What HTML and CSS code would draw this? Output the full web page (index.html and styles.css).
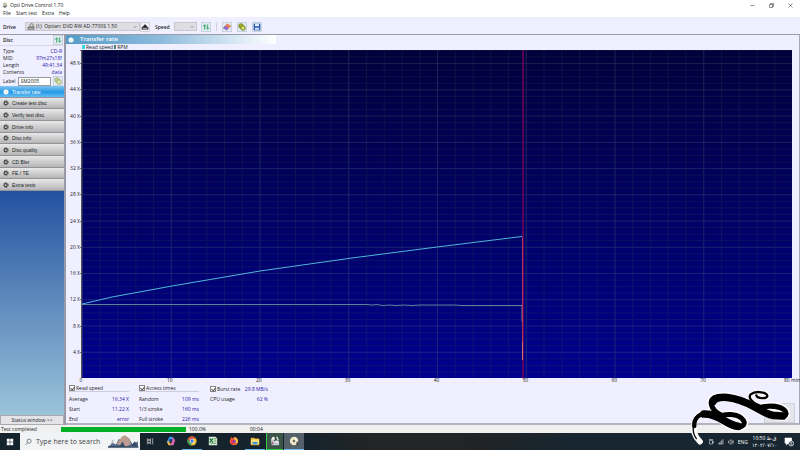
FILE: index.html
```html
<!DOCTYPE html>
<html lang="en">
<head>
<meta charset="utf-8">
<title>Opti Drive Control 1.70</title>
<link rel="stylesheet" href="styles.css">
</head>
<body>
<svg class="defs" width="0" height="0" aria-hidden="true">
  <symbol id="disc" viewBox="0 0 12 12"><circle cx="6" cy="6" r="5" fill="currentColor"/><circle cx="5" cy="6" r="1.7" fill="#ddd"/><path d="M6 6l5 4M7 3l3 1" stroke="#ddd" stroke-width="1.2"/></symbol>
  <symbol id="refresh" viewBox="0 0 12 12"><path d="M4 10V3M1.5 5.500L4 2.500l2.500 3M8.500 2v7M6.500 7l2 2.500 2-2.500" fill="none" stroke="#36a56b" stroke-width="1.400"/></symbol>
  <symbol id="discs" viewBox="0 0 12 12"><circle cx="4.500" cy="4.500" r="3.500" fill="#a9b52c" stroke="#606718"/><circle cx="7.500" cy="7.500" r="3.500" fill="#c4ce45" stroke="#606718"/><circle cx="7.500" cy="7.500" r="1" fill="#fff"/></symbol>
</svg>
<header class="titlebar">
  <svg class="app-icon" viewBox="0 0 12 12"><path d="M1 8l6-3 4 2-5 4z" fill="#777"/><circle cx="6" cy="4" r="3" fill="#d9d59b" stroke="#777"/></svg>
  <h1>Opti Drive Control 1.70</h1>
  <div class="window-buttons">
    <button aria-label="Minimize"><svg viewBox="0 0 10 10"><path d="M1 5h8"/></svg></button>
    <button aria-label="Restore"><svg viewBox="0 0 10 10"><path d="M1 3h6v6H1zM3 3V1h6v6H7"/></svg></button>
    <button aria-label="Close"><svg viewBox="0 0 10 10"><path d="M1 1l8 8M9 1L1 9"/></svg></button>
  </div>
</header>
<nav class="menubar"><button>File</button><button>Start test</button><button>Extra</button><button>Help</button></nav>
<div class="toolbar">
  <label class="drive-label" for="drive">Drive</label>
  <div class="drive-box">
    <svg class="icon" viewBox="0 0 12 12"><path d="M1 6l3-1h7v5H1z" fill="#777"/><circle cx="7" cy="3.500" r="2.500" fill="#ddd" stroke="#555"/><path d="M3 8h6" stroke="#eee"/></svg>
    <select id="drive"><option>(I:)&nbsp; Optiarc DVD RW AD-7700S 1.50</option></select>
    <svg class="chevron" viewBox="0 0 8 8"><path d="M1 2l3 3 3-3"/></svg>
  </div>
  <button class="tool eject" aria-label="Eject"><svg class="icon" viewBox="0 0 12 12"><path d="M6 2l4 4H2z" fill="#222"/><path d="M1 6h10v4H1z" fill="#444"/><path d="M3 8.500h6" stroke="#eee"/></svg></button>
  <label class="speed-label" for="speed">Speed</label>
  <div class="speed-box"><select id="speed"><option></option></select><svg class="chevron" viewBox="0 0 8 8"><path d="M1 2l3 3 3-3"/></svg></div>
  <button class="tool framed" aria-label="Refresh speed"><svg class="icon"><use href="#refresh"/></svg></button>
  <span class="divider"></span>
  <button class="tool framed" aria-label="Erase disc"><svg class="icon" viewBox="0 0 12 12"><path d="M0 8l6-7 6 3-6 7z" fill="#ce688f"/><path d="M0 8l3-4 5 3-2 4z" fill="#8d70c8"/><path d="M6 1l6 3-2 3-6-3z" fill="#ee8848"/></svg></button>
  <button class="tool framed" aria-label="Copy disc"><svg class="icon"><use href="#discs"/></svg></button>
  <button class="tool framed" aria-label="Save"><svg class="icon" viewBox="0 0 12 12"><path d="M1 1h10v10H1z" fill="#2852b8"/><path d="M3 1h6v4H3zM3 7h6v3H3z" fill="#dce9ff"/></svg></button>
</div>
<div class="workspace">
  <aside class="sidebar">
    <div class="disc-head"><h2>Disc</h2><button class="tool framed" aria-label="Refresh disc"><svg class="icon"><use href="#refresh"/></svg></button></div>
    <dl class="disc-info">
      <div><dt>Type</dt><dd>CD-R</dd></div>
      <div><dt>MID</dt><dd>97m27s18f</dd></div>
      <div><dt>Length</dt><dd>49:41.34</dd></div>
      <div><dt>Contents</dt><dd>data</dd></div>
    </dl>
    <div class="disc-label"><label for="label">Label</label><input id="label" value="SM2005"><button class="tool framed" aria-label="Edit label"><svg class="icon pale"><use href="#discs"/></svg></button></div>
    <nav class="tests">
      <button class="active"><svg><use href="#disc"/></svg>Transfer rate</button>
      <button><svg><use href="#disc"/></svg>Create test disc</button>
      <button><svg><use href="#disc"/></svg>Verify test disc</button>
      <button><svg><use href="#disc"/></svg>Drive info</button>
      <button><svg><use href="#disc"/></svg>Disc info</button>
      <button><svg><use href="#disc"/></svg>Disc quality</button>
      <button><svg><use href="#disc"/></svg>CD Bler</button>
      <button><svg><use href="#disc"/></svg>FE / TE</button>
      <button><svg><use href="#disc"/></svg>Extra tests</button>
    </nav>
    <div class="side-fill"></div>
    <button class="status-toggle">Status window &gt;&gt;</button>
  </aside>
  <main class="content">
    <div class="panel-title"><svg><use href="#disc"/></svg><h2>Transfer rate</h2></div>
    <div class="legend"><i></i><span>Read speed</span><i class="rpm"></i><span>RPM</span></div>
    <div class="chart">
      <div class="y-axis"><span></span><span>48 X</span><span>44 X</span><span>40 X</span><span>36 X</span><span>32 X</span><span>28 X</span><span>24 X</span><span>20 X</span><span>16 X</span><span>12 X</span><span>8 X</span><span>4 X</span></div>
      <svg class="plot" viewBox="0 0 710 328" preserveAspectRatio="none" role="img" aria-label="Read speed over time">
        <defs>
          <linearGradient id="sky" x2="0" y2="1"><stop offset="0" stop-color="#00003c"/><stop offset=".5" stop-color="#000064"/><stop offset="1" stop-color="#00008e"/></linearGradient>
          <pattern id="minor" width="17.75" height="6.56" y="328" patternUnits="userSpaceOnUse"><path d="M.5 0V7M0 .5H18" stroke="#304848" stroke-opacity=".24" fill="none"/></pattern>
          <pattern id="major" width="88.75" height="26.24" y="328" patternUnits="userSpaceOnUse"><path d="M.5 0V27M0 .5H89" stroke="#65719a" stroke-opacity=".18" fill="none"/></pattern>
        </defs>
        <path d="M0 0H710V328H0z" fill="url(#sky)"/>
        <path d="M0 0H710V328H0z" fill="url(#minor)"/>
        <path d="M0 0H710V328H0z" fill="url(#major)"/>
        <path d="M441 0V328" stroke="#760057" stroke-width="1.500"/>
        <path d="M0 254.500H285l5 .5 5-.5 6 1 6-.5 7 .5 8-.5 8 .5 8-.5h35l7 .5H440V272" class="trace rpm"/>
        <path d="M0 254L30 247L90 236L178 221L270 208L355 197L440 186.500" class="trace speed"/>
        <path d="M440.500 187V309" stroke="#b73365"/>
        <path d="M440.500 292V310" stroke="#c87372"/>
      </svg>
      <div class="x-axis"><span>0</span><span>10</span><span>20</span><span>30</span><span>40</span><span>50</span><span>60</span><span>70</span><span>80 min</span></div>
    </div>
    <section class="results">
      <div class="result-group">
        <label class="group-head"><input type="checkbox" checked>Read speed</label>
        <p><span>Average</span><b>16.34 X</b></p><p><span>Start</span><b>11.22 X</b></p><p><span>End</span><b>error</b></p>
      </div>
      <div class="result-group">
        <label class="group-head"><input type="checkbox" checked>Access times</label>
        <p><span>Random</span><b>109 ms</b></p><p><span>1/3 stroke</span><b>160 ms</b></p><p><span>Full stroke</span><b>226 ms</b></p>
      </div>
      <div class="result-group burst">
        <div class="burst-head"><label class="group-head"><input type="checkbox" checked>Burst rate</label><b>29.8 MB/s</b></div>
        <p><span>CPU usage</span><b>62 %</b></p>
      </div>
      <button class="start-button">Start</button>
    </section>
  </main>
</div>
<footer class="statusbar"><span class="status-text">Test completed</span><div class="progress"></div><span class="percent">100.0%</span><span>00:04</span></footer>
<div class="taskbar">
  <button class="start" aria-label="Start menu"><svg viewBox="0 0 10 10"><path d="M1 1h3.700v3.700H1zM5.300 1H9v3.700H5.300zM1 5.300h3.700V9H1zM5.300 5.300H9V9H5.300z" fill="#fff"/></svg></button>
  <div class="search">
    <svg class="glass" viewBox="0 0 12 12"><circle cx="7" cy="4.500" r="3.500"/><path d="M4.500 7L1 11"/></svg>
    <input aria-label="Search" placeholder="Type here to search">
    <svg class="scene" viewBox="0 0 90 40"><path d="M0 36l13-12 10 5 9-17 8 7 9-16 12 8 10 17 16-8v15z" fill="#536b8a"/><path d="M25 27L40 6l9-4 13 9 4 17-14 8z" fill="#bd9b91"/><path d="M34 34l8-14 8 15zM66 33l12-14 8 14z" fill="#344b6a"/><path d="M0 36h88" stroke="#283d5b" stroke-width="4"/><path d="M9 28l5-12 2 14" stroke="#567" fill="none"/></svg>
  </div>
  <button class="app small" aria-label="Task view"><svg viewBox="0 0 12 12"><path d="M2 2v2h5V2M2 11V9h5v2M2 5h5v3H2zM10 2v9" stroke="#ddd" fill="none"/></svg></button>
  <button class="app" aria-label="Copilot"><svg viewBox="0 0 12 12"><path d="M4 1h4l1 4-4 1-2 4-2-3z" fill="#2998ee"/><path d="M8 1l3 4-2 6H5l2-6z" fill="#d966ae"/><path d="M1 7l3-1 2 5H3z" fill="#f3b442"/><path d="M4 4h4L7 8H4z" fill="#243b5e"/></svg></button>
  <button class="app open" aria-label="Chrome"><svg viewBox="0 0 12 12"><circle cx="6" cy="6" r="5.500" fill="#ecc538"/><path d="M1.200 3.300A5.500 5.500 0 0 1 10.800 3.300H6L3.600 7.400z" fill="#dd4b3e"/><path d="M1.200 3.300L4 8l2 .5-1.500 2.800A5.500 5.500 0 0 1 1.200 3.300" fill="#379b55"/><circle cx="6" cy="6" r="2.700" fill="#fff"/><circle cx="6" cy="6" r="2" fill="#3979da"/></svg></button>
  <button class="app" aria-label="Spreadsheet"><svg viewBox="0 0 12 12"><path d="M1 1h8l2 2v8H1z" fill="#dcebd9"/><path d="M7 3h3M7 5h3M7 7h3M3 9h7" stroke="#65a363"/><path d="M2 3l4 5M6 3L2 8" stroke="#267842" stroke-width="1.500"/></svg></button>
  <button class="app" aria-label="Firefox"><svg viewBox="0 0 12 12"><path d="M2 3l1-2 1 2 3-2 1 2 1-1c4 5 1 9-3 9S-1 8 2 3z" fill="#f4682b"/><path d="M7 1c4 3 5 6 2 8L6 7z" fill="#ffc43d"/><circle cx="6" cy="6.500" r="2.300" fill="#8744ae"/><path d="M2 4l4 1-2 2 3 2-4 1z" fill="#eb3654"/></svg></button>
  <button class="app open" aria-label="File Explorer"><svg viewBox="0 0 12 12"><path d="M1 2h4l1 1h5v8H1z" fill="#e6aa2c"/><path d="M1 4h10v6H1z" fill="#ffe076"/><path d="M3 7h6v3H3z" fill="#4198d5"/></svg></button>
  <button class="app green" aria-label="Capture tool"><svg viewBox="0 0 12 12"><path d="M1 4l3-1 1 3 4-1 2 2v4H2z" fill="#bec7d0"/><circle cx="4" cy="3" r="2" fill="#e9e9e9"/><path d="M8 1l2 4M6 7h4" stroke="#f8f8f8" stroke-width="1.500"/><path d="M3 7v3" stroke="#bd5368" stroke-width="1.500"/></svg></button>
  <button class="app current" aria-label="Opti Drive Control"><svg viewBox="0 0 12 12"><circle cx="6" cy="6" r="5" fill="#ece6c5"/><path d="M6 6l2-5 3 4z" fill="#fffbed"/><circle cx="6" cy="6" r="1.500" fill="#666"/><path d="M9 7h2v4H9z" fill="#444"/></svg></button>
  <div class="tray">
    <svg viewBox="0 0 12 12"><path d="M3 3h6v7H3zM2 1h8M9 5h2v3H9" /></svg>
    <svg viewBox="0 0 12 12"><path d="M1 10L10 1v9zM4 10V7M7 10V4"/></svg>
    <svg viewBox="0 0 12 12"><path d="M1 4h2l3-3v10L3 8H1zM8 4q2 2 0 4M9 2q4 4 0 8"/></svg>
    <span>ENG</span>
    <div class="clock"><span>10:50 ق.ظ</span><span>۱۴۰۲/۰۷/۱۰</span></div>
    <button class="notice" aria-label="Notifications"><svg viewBox="0 0 14 14"><path d="M1 1h10v8H6l-3 3V9H1z" fill="#fff" stroke="none"/><circle cx="10" cy="9" r="3.500" fill="#34444f"/><path d="M10 7v4"/></svg></button>
  </div>
</div>
<svg class="signature" viewBox="0 0 360 210" aria-hidden="true">
  <g class="halo">
    <path d="M60 185C44 170 38 148 44 125C48 108 63 100 88 100" stroke-width="17"/>
    <path d="M88 100C121 105 145 148 179 141C207 134 188 107 158 104Q139 103 122 107M123 105C90 89 83 56 111 51C161 40 224 87 282 106C311 116 325 106 315 92C299 76 274 77 248 80" stroke-width="25"/>
    <path d="M248 80C217 70 203 53 212 43C228 30 264 38 262 48C260 58 231 56 229 46" stroke-width="13"/>
  </g>
  <g class="ink">
    <path d="M43 138C41 112 62 98 88 100" stroke-width="13"/>
    <path d="M88 100C121 105 145 148 179 141C207 134 188 107 158 104Q139 103 122 107M123 105C90 89 83 56 111 51C161 40 224 87 282 106C311 116 325 106 315 92C299 76 274 77 248 80" stroke-width="15"/>
    <path d="M72 102C113 100 137 133 174 139M98 66C106 43 165 48 224 81S279 105 308 108" stroke-width="23"/>
    <path d="M248 80C217 70 203 53 212 43C228 30 264 38 262 48C260 58 231 56 229 46" stroke-width="7"/>
    <path d="M40 137C38 154 43 168 49 176" stroke-width="4"/>
  </g>
</svg>
</body>
</html>
```
FILE: styles.css
```css
* { box-sizing: border-box; }
body { margin: 0; height: 100vh; display: flex; flex-direction: column; overflow: hidden; font: 5px/8px "Open Sans", sans-serif; color: #222; background: #f0efff; }
button, input, select { font: inherit; color: inherit; margin: 0; padding: 0; border: 0; background: none; }
h1, h2, p, dl, dd { margin: 0; font: inherit; }
b { font-weight: 400; color: #2b20a8; }
svg { flex: none; }
.defs { position: absolute; }
.icon { display: block; width: 8px; height: 8px; }
.titlebar { display: flex; align-items: center; height: 10px; padding-left: 2px; gap: 2px; background: #fff; }
.app-icon { width: 6px; height: 7px; }
.window-buttons { display: flex; margin-left: auto; }
.window-buttons button { width: 19px; height: 9px; display: flex; align-items: center; justify-content: center; }
.window-buttons svg { width: 5px; height: 5px; fill: none; stroke: #222; stroke-width: 1; }
.menubar { height: 7px; display: flex; gap: 5px; padding-left: 3px; line-height: 7px; background: #fff; }
.menubar button { height: 7px; }
.toolbar { display: flex; align-items: center; height: 18px; flex: none; padding: 2px 3px 0; border-bottom: 1px solid #9b9ba6; }
.drive-label { width: 22px; font-weight: 600; }
.drive-box, .speed-box { display: flex; align-items: center; height: 9px; border: 1px solid #c8c8ce; background: #dddde2; }
.drive-box { width: 115px; padding-left: 1px; gap: 1px; }
.drive-box select, .speed-box select { flex: 1; min-width: 0; height: 7px; appearance: none; line-height: 7px; }
.chevron { width: 4px; height: 4px; margin-right: 2px; fill: none; stroke: #666; }
.tool { width: 10px; height: 10px; display: flex; align-items: center; justify-content: center; flex: none; }
.framed { border: 1px solid #c4d3df; background: #e2edf2; }
.eject { border: 1px solid #d3d3da; }
.speed-label { font-weight: 600; margin-left: 5px; width: 19px; }
.speed-box { width: 23px; }
.speed-box + .tool { margin-left: 4px; }
.divider { width: 1px; height: 9px; margin: 0 5px; background: #d2d2dc; }
.divider ~ .tool { margin-right: 5px; }
.workspace { display: flex; flex: 1; min-height: 0; }
.sidebar { width: 66px; flex: none; display: flex; flex-direction: column; border-right: 2px solid #9999a8; }
.disc-head { height: 11px; display: flex; align-items: center; justify-content: space-between; padding: 0 1px 0 3px; border-bottom: 1px solid #d9d9e4; font-weight: 600; }
.disc-head h2 { font-weight: 600; }
.disc-info { padding: 2px 2px 0 3px; line-height: 7px; }
.disc-info div { display: flex; justify-content: space-between; }
.disc-info dd { color: #2b20a8; }
.disc-label { display: flex; align-items: center; gap: 2px; padding: 0 1px 0 3px; }
.disc-label input { flex: 1; min-width: 0; height: 9px; padding-left: 2px; border: 1px solid #9999a0; background: #fff; }
.pale { opacity: .55; }
.tests { flex: none; display: grid; grid-template-rows: repeat(3, 12px 11px 12px); height: 105px; font-family: "Liberation Sans", sans-serif; }
.tests button { display: flex; align-items: center; gap: 3px; padding-left: 3px; text-align: left; background: linear-gradient(#e8e8e8, #b6b6b8); border-bottom: 1px solid #929298; }
.tests svg { width: 6px; height: 6px; color: #444; }
.tests .active { color: #fff; background: linear-gradient(#81c4ee, #269ae8 55%, #65bdf2); }
.tests .active svg, .panel-title svg { color: #fff; }
.side-fill { flex: 1; background: linear-gradient(#2451a0, #9ac4da); }
.status-toggle { height: 10px; line-height: 9px; background: #e4e4e8; border: 1px solid #aaaab2; }
.content { flex: 1; min-width: 0; display: flex; flex-direction: column; border-right: 1px solid #a8a8b4; border-bottom: 2px solid #b3b3bf; }
.panel-title { flex: none; display: flex; align-items: center; gap: 6px; width: 210px; height: 9px; padding-left: 2px; color: #fff; font: 600 6px/9px "Open Sans", sans-serif; background: linear-gradient(90deg, #559bc7, #8dbbdc 45%, #fff); }
.panel-title svg { width: 6px; height: 6px; }
.panel-title h2 { font-weight: 600; }
.legend { display: flex; align-items: center; height: 6px; flex: none; gap: 1px; padding-left: 16px; line-height: 6px; }
.legend i { width: 3px; height: 4px; background: #35dce4; }
.legend .rpm { width: 2px; background: #557b7b; }
.chart { flex: 1; min-height: 0; display: grid; grid-template: minmax(0, 1fr) 7px / 15px minmax(0, 1fr); margin-right: 7px; }
.y-axis { display: grid; grid-template-rows: 2fr repeat(12, 4fr); text-align: right; }
.y-axis span { height: 8px; margin-top: -4px; background: linear-gradient(#777, #777) right 4px / 1px 1px no-repeat; padding-right: 1px; }
.plot { width: 100%; height: 100%; border-left: 1px solid #555; }
.trace { fill: none; }
.trace.speed { stroke: #4eb7d8; stroke-width: 1; }
.trace.rpm { stroke: #607f9a; stroke-width: 1; }
.x-axis { grid-column: 2; display: flex; justify-content: space-between; line-height: 5px; }
.x-axis span { width: 0; display: flex; justify-content: center; white-space: nowrap; }
.results { flex: none; display: flex; align-items: flex-start; gap: 10px; padding: 0 4px 0 3px; height: 38px; }
.result-group { width: 60px; }
.result-group p, .burst-head { display: flex; justify-content: space-between; align-items: center; height: 10px; }
.result-group .group-head { display: flex; align-items: center; height: 7px; gap: 1px; margin-bottom: 2px; white-space: nowrap; border-bottom: 1px solid #cdcddc; }
.result-group .burst-head { height: 7px; margin-bottom: 2px; }
.result-group .burst-head .group-head { border: 0; margin: 0; }
.group-head input { appearance: none; width: 6px; height: 6px; border: 1px solid #888; background: #fff; position: relative; }
.group-head input::after { content: ""; position: absolute; left: 1px; top: 0; width: 2px; height: 3px; border: solid #555; border-width: 0 1px 1px 0; transform: rotate(40deg); }
.burst { width: 58px; margin-left: 1px; }
.start-button { width: 31px; height: 20px; align-self: flex-end; margin-left: auto; border: 1px solid #d0d0d8; background: #e4e4eb; color: #888; }
.statusbar { display: flex; align-items: center; height: 8px; flex: none; padding-left: 1px; line-height: 8px; background: #f0f0f0; }
.status-text { width: 60px; }
.progress { width: 125px; height: 5px; background: #06b025; }
.percent { width: 61px; padding-left: 3px; }
.statusbar span:last-child { padding-left: 3px; }
.taskbar { display: flex; height: 17px; flex: none; color: #fff; background: linear-gradient(90deg, #14232c 0 38%, #222426 46% 58%, #172630 72%); }
.start { width: 20px; }
.start svg { width: 8px; height: 8px; display: block; margin: auto; }
.search { display: flex; align-items: center; width: 120px; padding: 0 1px 0 5px; gap: 4px; background: #f2f3f4; color: #333; }
.glass { width: 7px; height: 8px; fill: none; stroke: #333; }
.search input { flex: 1; min-width: 0; font: 7px "Open Sans", sans-serif; }
.search input::placeholder { color: #444; opacity: 1; }
.search .scene { width: 31px; height: 15px; }
.app { width: 20px; margin-right: 1px; display: flex; align-items: center; justify-content: center; border-bottom: 1px solid transparent; }
.app svg { width: 10px; height: 10px; }
.app.small svg { width: 8px; height: 8px; }
.app.open { border-bottom-color: #6bb4e8; }
.app.green { width: 17px; background: #3c5348; border-left: 1px solid #31cf47; border-bottom-color: #31cf47; }
.app.current { background: #53606a; border-bottom-color: #76b9ed; }
.tray { margin-left: auto; display: flex; align-items: center; gap: 4px; padding-right: 6px; font-size: 5px; }
.tray svg { width: 6px; height: 6px; fill: none; stroke: #fff; }
.clock { display: flex; flex-direction: column; align-items: center; font: 5px/7px "Open Sans", "DejaVu Sans", sans-serif; width: 25px; white-space: nowrap; }
.notice { margin-left: 3px; display: flex; }
.tray .notice svg { width: 10px; height: 10px; }
.signature { position: absolute; right: 0; bottom: 0; width: 120px; height: 70px; pointer-events: none; fill: none; stroke-linecap: round; stroke-linejoin: round; }
.halo { stroke: #fff; }
.ink { stroke: #000; }
```
